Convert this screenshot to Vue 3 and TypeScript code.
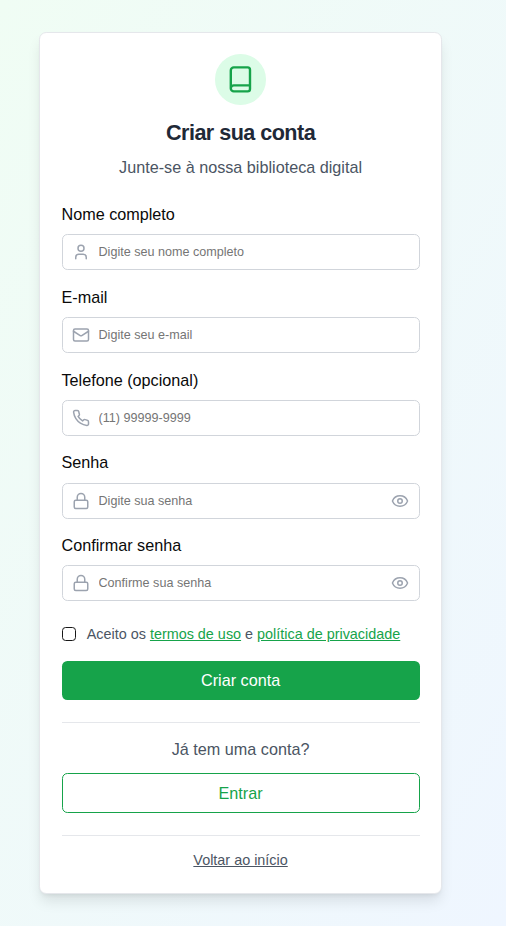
<script setup lang="ts">
import { reactive, ref } from 'vue'

type FieldKey = 'name' | 'email' | 'phone' | 'password' | 'confirm'

interface Field {
  key: FieldKey
  label: string
  placeholder: string
  type: 'text' | 'email' | 'tel' | 'password'
  icon: string[]
}

const lockIcon = [
  'M5 11h14a2 2 0 0 1 2 2v7a2 2 0 0 1-2 2H5a2 2 0 0 1-2-2v-7a2 2 0 0 1 2-2z',
  'M7 11V7a5 5 0 0 1 10 0v4',
]

const fields: Field[] = [
  {
    key: 'name',
    label: 'Nome completo',
    placeholder: 'Digite seu nome completo',
    type: 'text',
    icon: ['M19 21v-2a4 4 0 0 0-4-4H9a4 4 0 0 0-4 4v2', 'M16 7a4 4 0 1 1-8 0a4 4 0 0 1 8 0z'],
  },
  {
    key: 'email',
    label: 'E-mail',
    placeholder: 'Digite seu e-mail',
    type: 'email',
    icon: [
      'M4 4h16a2 2 0 0 1 2 2v12a2 2 0 0 1-2 2H4a2 2 0 0 1-2-2V6a2 2 0 0 1 2-2z',
      'm22 7-8.97 5.7a1.94 1.94 0 0 1-2.06 0L2 7',
    ],
  },
  {
    key: 'phone',
    label: 'Telefone (opcional)',
    placeholder: '(11) 99999-9999',
    type: 'tel',
    icon: [
      'M22 16.92v3a2 2 0 0 1-2.18 2 19.79 19.79 0 0 1-8.63-3.07 19.5 19.5 0 0 1-6-6 19.79 19.79 0 0 1-3.07-8.67A2 2 0 0 1 4.11 2h3a2 2 0 0 1 2 1.72 12.84 12.84 0 0 0 .7 2.81 2 2 0 0 1-.45 2.11L8.09 9.91a16 16 0 0 0 6 6l1.27-1.27a2 2 0 0 1 2.11-.45 12.84 12.84 0 0 0 2.81.7A2 2 0 0 1 22 16.92z',
    ],
  },
  { key: 'password', label: 'Senha', placeholder: 'Digite sua senha', type: 'password', icon: lockIcon },
  { key: 'confirm', label: 'Confirmar senha', placeholder: 'Confirme sua senha', type: 'password', icon: lockIcon },
]

const form = reactive<Record<FieldKey, string>>({ name: '', email: '', phone: '', password: '', confirm: '' })
const visible = reactive<Partial<Record<FieldKey, boolean>>>({})
const accepted = ref(false)
</script>

<template>
  <main class="page">
    <section class="card">
      <header class="header">
        <div class="badge">
          <svg class="icon" viewBox="0 0 24 24">
            <path d="M4 19.5v-15A2.5 2.5 0 0 1 6.5 2H18a2 2 0 0 1 2 2v16a2 2 0 0 1-2 2H6.5a2.5 2.5 0 0 1 0-5H20" />
          </svg>
        </div>
        <h1>Criar sua conta</h1>
        <p>Junte-se à nossa biblioteca digital</p>
      </header>

      <form @submit.prevent>
        <div v-for="field in fields" :key="field.key" class="field">
          <label :for="field.key">{{ field.label }}</label>
          <div class="control">
            <svg class="icon" viewBox="0 0 24 24">
              <path v-for="d in field.icon" :key="d" :d="d" />
            </svg>
            <input
              :id="field.key"
              v-model="form[field.key]"
              :type="visible[field.key] ? 'text' : field.type"
              :placeholder="field.placeholder"
            />
            <button
              v-if="field.type === 'password'"
              type="button"
              class="toggle"
              @click="visible[field.key] = !visible[field.key]"
            >
              <svg class="icon" viewBox="0 0 24 24">
                <path
                  d="M2.062 12.348a1 1 0 0 1 0-.696 10.75 10.75 0 0 1 19.876 0 1 1 0 0 1 0 .696 10.75 10.75 0 0 1-19.876 0"
                />
                <circle cx="12" cy="12" r="3" />
              </svg>
            </button>
          </div>
        </div>

        <div class="terms">
          <input id="terms" v-model="accepted" type="checkbox" />
          <label for="terms">
            Aceito os <a href="#">termos de uso</a> e <a href="#">política de privacidade</a>
          </label>
        </div>

        <button class="btn primary" type="submit">Criar conta</button>
      </form>

      <div class="signin">
        <p>Já tem uma conta?</p>
        <button class="btn outline" type="button">Entrar</button>
      </div>

      <footer class="footer"><a href="#">Voltar ao início</a></footer>
    </section>
  </main>
</template>

<style>
body {
  margin: 0;
}
</style>

<style scoped>
.page,
.page * {
  box-sizing: border-box;
}

.page {
  min-height: 926px;
  padding: 32.4px 64px 32px 39px;
  background: linear-gradient(to bottom right, #f0fdf4, #eff6ff);
  font-family: 'Liberation Sans', Arial, sans-serif;
  font-size: 16.2px;
  line-height: 21.6px;
  color: #0a0a0a;
}

.card {
  width: 403px;
  height: 861.4px;
  padding: 21.6px 21.4px 21.6px 21.5px;
  border: 1px solid #e5e7eb;
  border-radius: 7.2px;
  background: #fff;
  box-shadow: 0 9px 13.5px -2.7px rgb(0 0 0 / 0.1), 0 3.6px 5.4px -3.6px rgb(0 0 0 / 0.1);
}

.icon {
  display: block;
  flex: none;
  width: 18px;
  height: 18px;
  fill: none;
  stroke: currentColor;
  stroke-width: 2;
  stroke-linecap: round;
  stroke-linejoin: round;
}

.header {
  display: flex;
  flex-direction: column;
  align-items: center;
  height: 150px;
}

.badge {
  display: grid;
  place-items: center;
  width: 50.4px;
  height: 50.4px;
  margin-top: -0.6px;
  border-radius: 50%;
  background: #dcfce7;
  color: #16a34a;
}

.badge .icon {
  width: 28.8px;
  height: 28.8px;
}

h1 {
  margin: 14px 0 0;
  font-size: 21.6px;
  line-height: 28.8px;
  letter-spacing: -0.54px;
  color: #1f2937;
}

p {
  margin: 0;
  color: #4b5563;
}

.header p {
  margin-top: 9px;
}

.field {
  display: flex;
  flex-direction: column;
  gap: 7.6px;
  margin-bottom: 17.6px;
}

.field label {
  height: 21.6px;
  line-height: 19.4px;
}

.control {
  display: flex;
  align-items: center;
  gap: 9px;
  height: 36px;
  padding: 0 10px 0 9px;
  border: 1px solid #d1d5db;
  border-radius: 5.4px;
  color: #9ca3af;
}

.control input {
  flex: 1;
  min-width: 0;
  padding: 0;
  border: 0;
  outline: 0;
  background: none;
  color: #0a0a0a;
  font: 12.6px 'Liberation Sans', Arial, sans-serif;
}

.control input::placeholder {
  color: #757575;
}

.toggle {
  padding: 0;
  border: 0;
  background: none;
  color: inherit;
}

.terms {
  display: flex;
  align-items: center;
  gap: 10.8px;
  height: 29.2px;
  padding-top: 2px;
  font-size: 14.4px;
  color: #4b5563;
}

.terms input {
  appearance: none;
  width: 14.4px;
  height: 14px;
  margin: 0;
  border: 1px solid #171717;
  border-radius: 3.6px;
}

.terms input:checked {
  background: #16a34a;
}

.terms a {
  color: #16a34a;
}

.btn {
  display: block;
  width: 100%;
  height: 39.6px;
  padding: 0;
  border-radius: 5.4px;
  font: 16.2px 'Liberation Sans', Arial, sans-serif;
}

.primary {
  margin-top: 12.6px;
  border: 0;
  background: #16a34a;
  color: #fff;
}

.outline {
  margin-top: 12.6px;
  padding-top: 1px;
  border: 1px solid #16a34a;
  background: #fff;
  color: #16a34a;
}

.signin {
  margin-top: 21.6px;
  padding-top: 16px;
  border-top: 1px solid #e5e7eb;
  text-align: center;
}

.footer {
  margin-top: 22.2px;
  padding-top: 13.8px;
  border-top: 1px solid #e5e7eb;
  text-align: center;
  font-size: 14.4px;
}

.footer a {
  color: #4b5563;
}
</style>
